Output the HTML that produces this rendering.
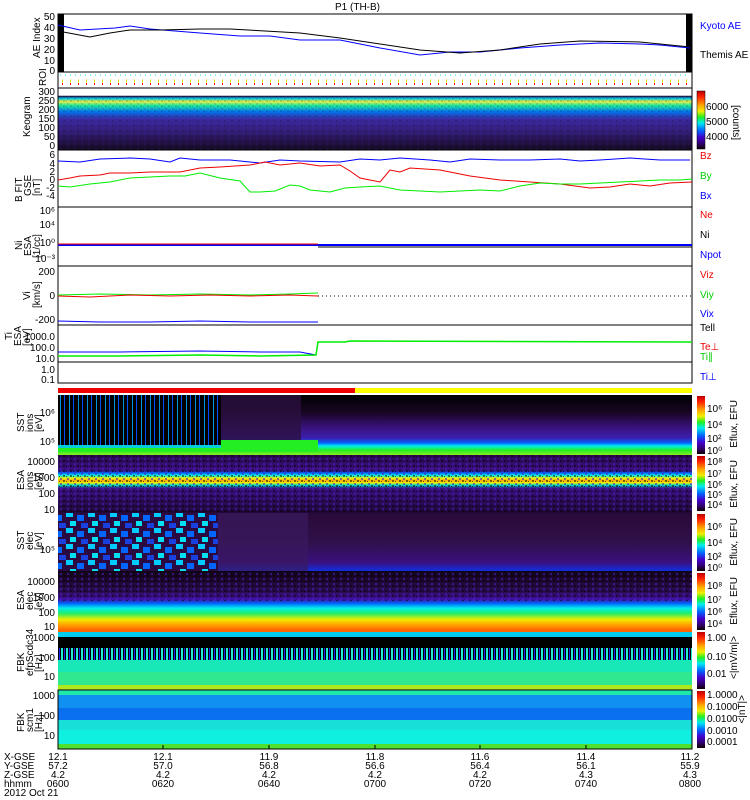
<!DOCTYPE html>
<html><head><meta charset="utf-8"><style>
html,body{margin:0;padding:0;background:#fff;width:750px;height:800px;overflow:hidden}
svg{display:block}
text{font-family:"Liberation Sans",sans-serif;font-size:10px;fill:#000}
</style></head><body>
<svg width="750" height="800" viewBox="0 0 750 800" xmlns="http://www.w3.org/2000/svg">
<defs>
<linearGradient id="cb" x1="0" y1="0" x2="0" y2="1">
<stop offset="0" stop-color="#b00"/><stop offset="0.1" stop-color="#f20"/><stop offset="0.25" stop-color="#fa0"/><stop offset="0.35" stop-color="#ee0"/><stop offset="0.45" stop-color="#2e2"/><stop offset="0.55" stop-color="#0ee"/><stop offset="0.68" stop-color="#06f"/><stop offset="0.8" stop-color="#40c"/><stop offset="0.9" stop-color="#307"/><stop offset="1" stop-color="#100"/>
</linearGradient>
<linearGradient id="keo" x1="0" y1="0" x2="0" y2="1">
<stop offset="0" stop-color="#fff"/><stop offset="0.12" stop-color="#fff"/><stop offset="0.13" stop-color="#204"/><stop offset="0.17" stop-color="#0cd"/><stop offset="0.22" stop-color="#ee4"/><stop offset="0.28" stop-color="#2e9"/><stop offset="0.38" stop-color="#07e"/><stop offset="0.5" stop-color="#3a2aa0"/><stop offset="0.7" stop-color="#351e78"/><stop offset="1" stop-color="#150a20"/>
</linearGradient>
<linearGradient id="esa1" x1="0" y1="0" x2="0" y2="1">
<stop offset="0" stop-color="#2a0a50"/><stop offset="0.27" stop-color="#3a1080"/><stop offset="0.31" stop-color="#06f"/><stop offset="0.35" stop-color="#0ee"/><stop offset="0.4" stop-color="#ee0"/><stop offset="0.44" stop-color="#fa0"/><stop offset="0.48" stop-color="#ee0"/><stop offset="0.52" stop-color="#0dc"/><stop offset="0.57" stop-color="#3a1080"/><stop offset="1" stop-color="#200838"/>
</linearGradient>
<linearGradient id="esa2" x1="0" y1="0" x2="0" y2="1">
<stop offset="0" stop-color="#120418"/><stop offset="0.35" stop-color="#2a0c50"/><stop offset="0.48" stop-color="#4010a0"/><stop offset="0.55" stop-color="#06f"/><stop offset="0.63" stop-color="#0ee"/><stop offset="0.72" stop-color="#2e6"/><stop offset="0.82" stop-color="#ee0"/><stop offset="0.9" stop-color="#fa0"/><stop offset="1" stop-color="#f60"/>
</linearGradient>
<linearGradient id="sst2" x1="0" y1="0" x2="0" y2="1">
<stop offset="0" stop-color="#2a0a38"/><stop offset="0.5" stop-color="#30104a"/><stop offset="0.85" stop-color="#3a1080"/><stop offset="1" stop-color="#1030e0"/>
</linearGradient>
<linearGradient id="sst1" x1="0" y1="0" x2="0" y2="1">
<stop offset="0" stop-color="#000"/><stop offset="0.3" stop-color="#1a0626"/><stop offset="0.55" stop-color="#3a1280"/><stop offset="0.72" stop-color="#3a20b0"/><stop offset="0.8" stop-color="#06f"/><stop offset="0.85" stop-color="#0ee"/><stop offset="0.92" stop-color="#2e2"/><stop offset="1" stop-color="#8e2"/>
</linearGradient>
<pattern id="noise" width="7" height="5" patternUnits="userSpaceOnUse">
<rect width="7" height="5" fill="none"/><rect x="0" y="0" width="2" height="2" fill="#000" opacity="0.5"/><rect x="4" y="3" width="2" height="2" fill="#4a20c0" opacity="0.6"/><rect x="3" y="1" width="1" height="1" fill="#000" opacity="0.6"/>
</pattern>
<pattern id="streak" width="9" height="10" patternUnits="userSpaceOnUse">
<rect width="9" height="10" fill="#000"/><rect x="1" width="1" height="10" fill="#0050ff"/><rect x="6" width="1" height="10" fill="#0090e0"/>
</pattern>
<pattern id="blocks" width="22" height="16" patternUnits="userSpaceOnUse">
<rect width="22" height="16" fill="#2a0a40"/><rect x="0" y="0" width="7" height="5" fill="#0cf"/><rect x="11" y="3" width="7" height="6" fill="#06f"/><rect x="4" y="9" width="6" height="5" fill="#00e0f0"/><rect x="15" y="11" width="7" height="5" fill="#1a40e0"/>
</pattern>
<pattern id="fbkst" width="5" height="10" patternUnits="userSpaceOnUse">
<rect width="5" height="10" fill="#000"/><rect x="1" width="2" height="10" fill="#20f0d0"/><rect x="4" width="1" height="10" fill="#2020f0"/>
</pattern>
</defs>

<text x="335" y="10" font-size="11">P1  (TH-B)</text>

<!-- AE panel -->
<rect x="58" y="14" width="634" height="58" fill="#fff" stroke="#000"/>
<rect x="58" y="14" width="6" height="58" fill="#000"/>
<rect x="686" y="14" width="6" height="58" fill="#000"/>
<polyline fill="none" stroke="#00f" points="58,25 80,30 115,28 130,26 150,29 200,33 240,36 270,36 300,40 340,40 380,48 420,55 450,52 480,52 520,48 560,45 600,43 640,44 660,45 690,48"/>
<polyline fill="none" stroke="#000" points="58,31 90,37 110,33 130,30 160,30 200,29 230,29 265,31 300,33 340,38 380,44 420,50 460,53 500,50 540,44 580,41 640,42 690,47"/>
<g text-anchor="end"><text x="55" y="20">50</text><text x="55" y="31">40</text><text x="55" y="42">30</text><text x="55" y="53">20</text><text x="55" y="64">10</text><text x="55" y="74">0</text></g>
<text transform="translate(40,58) rotate(-90)" font-size="9">AE Index</text>
<text x="700" y="29" style="fill:#00f">Kyoto AE</text>
<text x="700" y="58">Themis AE</text>

<!-- ROI -->
<rect x="58" y="72" width="634" height="16" fill="#fff" stroke="#000"/>
<line x1="60" y1="75" x2="690" y2="75" stroke="#0dd" stroke-dasharray="1,4"/>
<line x1="62" y1="81" x2="690" y2="81" stroke="#dd0" stroke-width="3" stroke-dasharray="1,7"/>
<line x1="62" y1="84" x2="690" y2="84" stroke="#e00" stroke-width="2" stroke-dasharray="1,7"/>
<text transform="translate(46,86) rotate(-90)" font-size="9">ROI</text>

<!-- Keogram -->
<rect x="58" y="88" width="634" height="62" fill="url(#keo)"/>
<rect x="58" y="96" width="634" height="54" fill="url(#noise)" opacity="0.3"/>
<rect x="58" y="88" width="634" height="62" fill="none" stroke="#000"/>
<g text-anchor="end" font-size="9"><text x="55" y="95">300</text><text x="55" y="104">250</text><text x="55" y="113">200</text><text x="55" y="122">150</text><text x="55" y="131">100</text><text x="55" y="140">50</text><text x="55" y="149">0</text></g>
<text transform="translate(30,137) rotate(-90)" font-size="9">Keogram</text>
<rect x="697" y="91" width="8" height="58" fill="url(#cb)" stroke="#000" stroke-width="0.5"/>
<text x="706" y="110" font-size="9">6000</text><text x="706" y="125" font-size="9">5000</text><text x="706" y="140" font-size="9">4000</text>
<text transform="translate(733,105) rotate(90)" font-size="9">[counts]</text>

<!-- B FIT -->
<rect x="58" y="150" width="634" height="57" fill="#fff" stroke="#000"/>
<polyline fill="none" stroke="#00f" points="58,161 80,162 100,159 130,158 150,159 170,162 180,158 200,160 230,160 250,162 260,163 280,160 300,161 340,162 360,159 380,160 400,158 430,160 450,162 470,159 500,160 530,160 560,159 580,161 600,160 630,158 660,160 690,160"/>
<polyline fill="none" stroke="#e00" points="58,180 70,178 80,176 100,175 110,173 130,173 150,172 180,172 200,168 220,167 250,165 265,162 280,165 300,163 320,166 340,165 350,171 360,178 380,182 390,170 400,172 410,168 440,170 470,176 500,180 530,182 560,184 590,188 610,187 630,184 650,186 670,183 692,182"/>
<polyline fill="none" stroke="#0e0" points="58,186 70,187 90,184 110,182 130,178 150,177 170,176 185,176 200,173 220,178 240,181 250,192 260,192 275,191 290,185 300,186 310,190 330,192 345,188 360,187 380,186 400,190 420,191 440,192 460,191 480,190 500,191 520,186 540,183 560,184 580,184 600,183 620,182 640,181 660,180 680,180 692,179"/>
<g text-anchor="end" font-size="9"><text x="55" y="158">6</text><text x="55" y="167">4</text><text x="55" y="175">2</text><text x="55" y="183">0</text><text x="55" y="191">-2</text><text x="55" y="199">-4</text></g>
<text transform="translate(22,202) rotate(-90)" font-size="9">B FIT</text>
<text transform="translate(31,196) rotate(-90)" font-size="8">GSE</text>
<text transform="translate(40,196) rotate(-90)" font-size="9">[nT]</text>
<text x="700" y="159" style="fill:#e00">Bz</text>
<text x="700" y="179" style="fill:#0c0">By</text>
<text x="700" y="199" style="fill:#00f">Bx</text>

<!-- Ni -->
<rect x="58" y="207" width="634" height="59" fill="#fff" stroke="#000"/>
<line x1="58" y1="245" x2="692" y2="245" stroke="#00f" stroke-width="2"/>
<line x1="58" y1="244" x2="318" y2="244" stroke="#e00"/>
<line x1="318" y1="247" x2="692" y2="247" stroke="#000"/>
<g text-anchor="end" font-size="9"><text x="55" y="214">10⁶</text><text x="55" y="228">10⁴</text><text x="55" y="246">10⁰</text><text x="55" y="262">10⁻³</text></g>
<text transform="translate(22,250) rotate(-90)" font-size="9">Ni</text>
<text transform="translate(31,256) rotate(-90)" font-size="8">ESA</text>
<text transform="translate(40,258) rotate(-90)" font-size="9">[1/cc]</text>
<text x="700" y="218" style="fill:#e00">Ne</text>
<text x="700" y="238">Ni</text>
<text x="700" y="258" style="fill:#00f">Npot</text>

<!-- Vi -->
<rect x="58" y="266" width="634" height="59" fill="#fff" stroke="#000"/>
<line x1="318" y1="296" x2="692" y2="296" stroke="#000" stroke-dasharray="1,3"/>
<polyline fill="none" stroke="#0e0" points="58,295 100,294 150,295 200,294 250,295 290,294 318,293"/>
<polyline fill="none" stroke="#e00" points="58,296 90,297 130,295 170,296 210,295 250,296 290,295 318,296"/>
<polyline fill="none" stroke="#00f" points="58,321 100,322 150,322 200,321 250,322 318,322"/>
<g text-anchor="end" font-size="9"><text x="55" y="275">200</text><text x="55" y="299">0</text><text x="55" y="323">-200</text></g>
<text transform="translate(30,300) rotate(-90)" font-size="9">Vi</text>
<text transform="translate(40,308) rotate(-90)" font-size="9">[km/s]</text>
<text x="700" y="278" style="fill:#e00">Viz</text>
<text x="700" y="298" style="fill:#0c0">Viy</text>
<text x="700" y="317" style="fill:#00f">Vix</text>

<!-- Ti -->
<rect x="58" y="325" width="634" height="58" fill="#fff" stroke="#000"/>
<line x1="58" y1="362" x2="692" y2="362" stroke="#000"/>
<polyline fill="none" stroke="#00f" points="58,352 120,352 200,351 260,352 300,352 316,355 318,342"/>
<polyline fill="none" stroke="#0e0" stroke-width="1.5" points="58,356 120,356 200,355 260,356 316,355 318,342 345,342 350,341 692,342"/>
<g text-anchor="end" font-size="9"><text x="55" y="340">1000.0</text><text x="55" y="351">100.0</text><text x="55" y="362">10.0</text><text x="55" y="373">1.0</text><text x="55" y="383">0.1</text></g>
<text transform="translate(12,340) rotate(-90)" font-size="9">Ti</text>
<text transform="translate(21,346) rotate(-90)" font-size="8">ESA</text>
<text transform="translate(30,346) rotate(-90)" font-size="9">[eV]</text>
<text x="700" y="331">Tell</text>
<text x="700" y="350" style="fill:#e00">Te⊥</text>
<text x="700" y="360" style="fill:#0c0">Ti∥</text>
<text x="700" y="380" style="fill:#00f">Ti⊥</text>

<!-- bar -->
<rect x="58" y="388" width="297" height="5" fill="#e00"/>
<rect x="355" y="388" width="337" height="5" fill="#ff0"/>

<!-- SST1 -->
<rect x="58" y="395" width="634" height="60" fill="url(#sst1)"/>
<rect x="58" y="395" width="163" height="50" fill="url(#streak)"/>
<rect x="58" y="445" width="163" height="3" fill="#0cd"/>
<rect x="58" y="448" width="163" height="4" fill="#2e2"/>
<rect x="221" y="395" width="80" height="45" fill="#2a1040" opacity="0.8"/>
<rect x="221" y="440" width="97" height="12" fill="#2e2"/>
<g text-anchor="end" font-size="9"><text x="55" y="416">10⁶</text><text x="55" y="445">10⁵</text></g>
<text transform="translate(24,432) rotate(-90)" font-size="9">SST</text>
<text transform="translate(33,432) rotate(-90)" font-size="8">ions</text>
<text transform="translate(42,432) rotate(-90)" font-size="9">[eV]</text>

<!-- ESA1 -->
<rect x="58" y="455" width="634" height="58" fill="url(#esa1)"/>
<rect x="58" y="455" width="634" height="58" fill="url(#noise)"/>
<g text-anchor="end" font-size="9"><text x="55" y="465">10000</text><text x="55" y="481">1000</text><text x="55" y="497">100</text><text x="55" y="513">10</text></g>
<text transform="translate(24,490) rotate(-90)" font-size="9">ESA</text>
<text transform="translate(33,490) rotate(-90)" font-size="8">ions</text>
<text transform="translate(42,490) rotate(-90)" font-size="9">[eV]</text>

<!-- SST2 -->
<rect x="58" y="513" width="634" height="58" fill="url(#sst2)"/>
<rect x="58" y="513" width="160" height="58" fill="url(#blocks)"/>
<rect x="218" y="513" width="90" height="58" fill="#3a1a60" opacity="0.7"/>
<text x="55" y="553" text-anchor="end" font-size="9">10⁵</text>
<text transform="translate(24,550) rotate(-90)" font-size="9">SST</text>
<text transform="translate(33,550) rotate(-90)" font-size="8">elec</text>
<text transform="translate(42,550) rotate(-90)" font-size="9">[eV]</text>

<!-- ESA2 -->
<rect x="58" y="571" width="634" height="59" fill="url(#esa2)"/>
<rect x="58" y="571" width="634" height="30" fill="url(#noise)"/>
<g text-anchor="end" font-size="9"><text x="55" y="585">10000</text><text x="55" y="601">1000</text><text x="55" y="616">100</text><text x="55" y="630">10</text></g>
<text transform="translate(24,610) rotate(-90)" font-size="9">ESA</text>
<text transform="translate(33,610) rotate(-90)" font-size="8">elec</text>
<text transform="translate(42,610) rotate(-90)" font-size="9">[eV]</text>

<!-- FBK1 -->
<rect x="58" y="630" width="634" height="60" fill="#1ee8c8"/>
<rect x="58" y="630" width="634" height="2" fill="#f60"/>
<rect x="58" y="632" width="634" height="5" fill="#0ce"/>
<rect x="58" y="637" width="634" height="11" fill="#000"/>
<rect x="58" y="648" width="634" height="12" fill="url(#fbkst)"/>
<rect x="58" y="660" width="634" height="12" fill="#18e8b8"/>
<rect x="58" y="672" width="634" height="13" fill="#30e890"/>
<rect x="58" y="685" width="634" height="5" fill="#b0e820"/>
<g text-anchor="end" font-size="9"><text x="55" y="641">1000</text><text x="55" y="661">100</text><text x="55" y="680">10</text></g>
<text transform="translate(24,672) rotate(-90)" font-size="9">FBK</text>
<text transform="translate(33,676) rotate(-90)" font-size="8">efpScdc34</text>
<text transform="translate(42,672) rotate(-90)" font-size="9">[Hz]</text>

<!-- FBK2 -->
<rect x="58" y="690" width="634" height="59" fill="#1ef0d8"/>
<rect x="58" y="691" width="634" height="4" fill="#20e8a8"/>
<rect x="58" y="695" width="634" height="13" fill="#1090f0"/>
<rect x="58" y="708" width="634" height="12" fill="#0a70f0"/>
<rect x="58" y="720" width="634" height="10" fill="#18e0d8"/>
<rect x="58" y="730" width="634" height="14" fill="#10f0e0"/>
<rect x="58" y="744" width="634" height="5" fill="#50e030"/>
<rect x="58" y="690" width="634" height="59" fill="none" stroke="#000"/>
<g text-anchor="end" font-size="9"><text x="55" y="699">1000</text><text x="55" y="719">100</text><text x="55" y="739">10</text></g>
<text transform="translate(24,732) rotate(-90)" font-size="9">FBK</text>
<text transform="translate(33,732) rotate(-90)" font-size="8">scm1</text>
<text transform="translate(42,732) rotate(-90)" font-size="9">[Hz]</text>

<!-- colorbars -->
<rect x="697" y="396" width="8" height="58" fill="url(#cb)"/>
<rect x="697" y="456" width="8" height="55" fill="url(#cb)"/>
<rect x="697" y="514" width="8" height="57" fill="url(#cb)"/>
<rect x="697" y="573" width="8" height="57" fill="url(#cb)"/>
<rect x="697" y="632" width="8" height="57" fill="url(#cb)"/>
<rect x="697" y="691" width="8" height="57" fill="url(#cb)"/>
<g font-size="8">
<text x="707" y="412">10⁶</text><text x="707" y="428">10⁴</text><text x="707" y="442">10²</text><text x="707" y="454">10⁰</text>
<text x="707" y="465">10⁸</text><text x="707" y="477">10⁷</text><text x="707" y="488">10⁶</text><text x="707" y="498">10⁵</text><text x="707" y="508">10⁴</text>
<text x="707" y="530">10⁶</text><text x="707" y="546">10⁴</text><text x="707" y="560">10²</text><text x="707" y="571">10⁰</text>
<text x="707" y="589">10⁸</text><text x="707" y="603">10⁷</text><text x="707" y="615">10⁶</text><text x="707" y="627">10⁴</text>
<text x="707" y="641">1.00</text><text x="707" y="660">0.10</text><text x="707" y="677">0.01</text>
<text x="707" y="698">1.0000</text><text x="707" y="710">0.1000</text><text x="707" y="722">0.0100</text><text x="707" y="734">0.0010</text><text x="707" y="745">0.0001</text>
</g>
<g font-size="8">
<text transform="translate(737,400) rotate(-90)" text-anchor="end">Eflux, EFU</text>
<text transform="translate(737,460) rotate(-90)" text-anchor="end">Eflux, EFU</text>
<text transform="translate(737,518) rotate(-90)" text-anchor="end">Eflux, EFU</text>
<text transform="translate(737,577) rotate(-90)" text-anchor="end">Eflux, EFU</text>
<text transform="translate(737,636) rotate(-90)" text-anchor="end">&lt;|mV/m|&gt;</text>
<text transform="translate(745,695) rotate(-90)" text-anchor="end">&lt;|nT|&gt;</text>
</g>

<!-- time ticks -->
<g stroke="#000">
<line x1="163" y1="745" x2="163" y2="749"/><line x1="269" y1="745" x2="269" y2="749"/><line x1="375" y1="745" x2="375" y2="749"/><line x1="480" y1="745" x2="480" y2="749"/><line x1="586" y1="745" x2="586" y2="749"/>
</g>

<!-- bottom labels -->
<g font-size="9">
<text x="4" y="760">X-GSE</text><text x="4" y="769">Y-GSE</text><text x="4" y="778">Z-GSE</text><text x="4" y="787">hhmm</text><text x="4" y="796">2012 Oct 21</text>
</g>
<g font-size="9" text-anchor="middle">
<text x="58" y="760">12.1</text><text x="58" y="769">57.2</text><text x="58" y="778">4.2</text><text x="58" y="787">0600</text>
<text x="163" y="760">12.1</text><text x="163" y="769">57.0</text><text x="163" y="778">4.2</text><text x="163" y="787">0620</text>
<text x="269" y="760">11.9</text><text x="269" y="769">56.8</text><text x="269" y="778">4.2</text><text x="269" y="787">0640</text>
<text x="375" y="760">11.8</text><text x="375" y="769">56.6</text><text x="375" y="778">4.2</text><text x="375" y="787">0700</text>
<text x="480" y="760">11.6</text><text x="480" y="769">56.4</text><text x="480" y="778">4.2</text><text x="480" y="787">0720</text>
<text x="586" y="760">11.4</text><text x="586" y="769">56.1</text><text x="586" y="778">4.3</text><text x="586" y="787">0740</text>
<text x="690" y="760">11.2</text><text x="690" y="769">55.9</text><text x="690" y="778">4.3</text><text x="690" y="787">0800</text>
</g>
</svg>
</body></html>
